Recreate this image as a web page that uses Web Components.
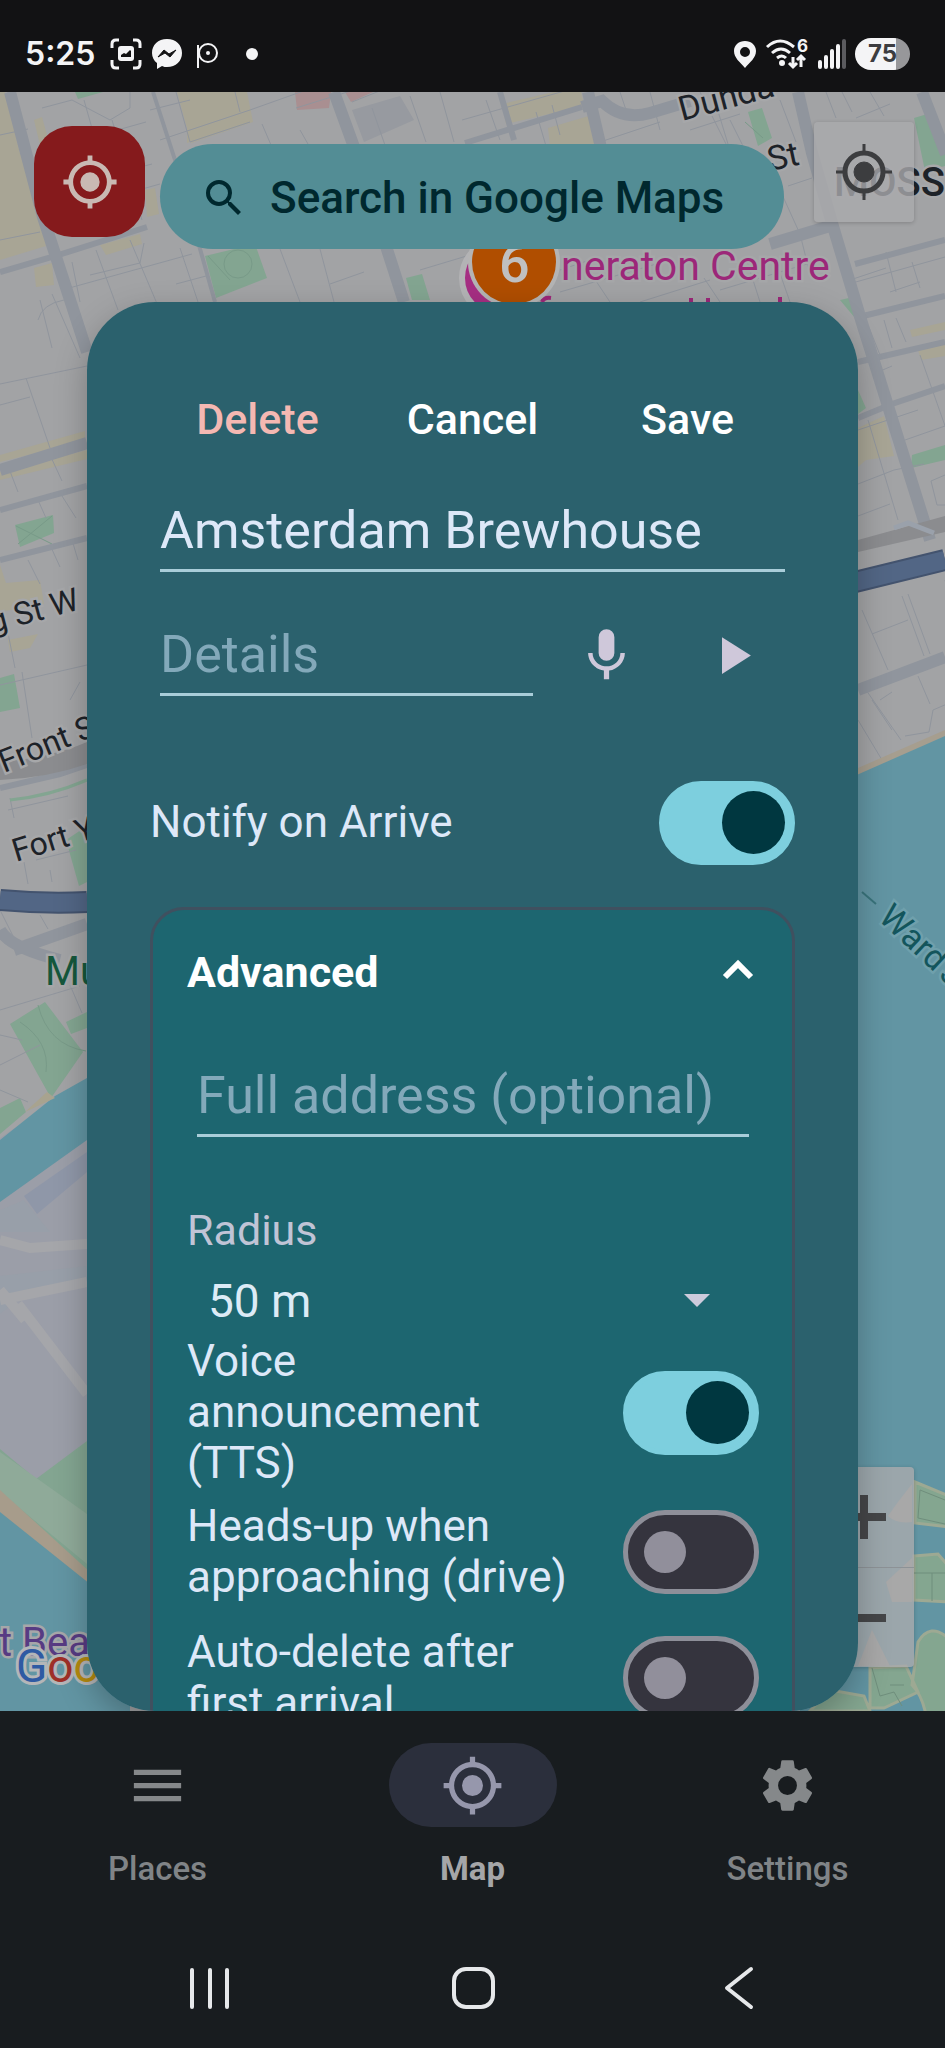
<!DOCTYPE html>
<html lang="en">
<head>
<meta charset="utf-8">
<meta name="viewport" content="width=device-width, initial-scale=1">
<title>Map</title>
<style>
    body {
        margin: 0;
        height: 100vh;
        display: flex;
        flex-direction: column;
        background: #181c1f;
        font-family: Roboto, "Liberation Sans", sans-serif;
        color: #dde8f8;
    }
</style>
</head>
<body>
    <status-bar time="5:25" battery="75"></status-bar>
    <map-stage>
        <city-map slot="map"></city-map>
        <locate-button slot="top"></locate-button>
        <search-pill slot="top">Search in Google Maps</search-pill>
        <map-controls slot="controls"></map-controls>
        <place-sheet>
            <sheet-action tone="danger" slot="actions">Delete</sheet-action>
            <sheet-action slot="actions">Cancel</sheet-action>
            <sheet-action slot="actions">Save</sheet-action>
            <line-field label="Name" value="Amsterdam Brewhouse"></line-field>
            <details-row></details-row>
            <toggle-row class="notify" checked>Notify on Arrive</toggle-row>
            <advanced-card heading="Advanced">
                <line-field label="Full address (optional)"></line-field>
                <radius-select label="Radius"></radius-select>
                <toggle-row checked>Voice<br>announcement<br>(TTS)</toggle-row>
                <toggle-row>Heads-up when<br>approaching (drive)</toggle-row>
                <toggle-row>Auto-delete after<br>first arrival</toggle-row>
            </advanced-card>
        </place-sheet>
    </map-stage>
    <nav-bar>
        <nav-tab icon="menu">Places</nav-tab>
        <nav-tab icon="locate" active>Map</nav-tab>
        <nav-tab icon="gear">Settings</nav-tab>
    </nav-bar>
    <system-bar></system-bar>

<script>
const locateIcon = `<path fill-rule="evenodd" d="M12 8a4 4 0 1 0 0 8 4 4 0 0 0 0-8zm8.94 3A8.99 8.99 0 0 0 13 3.06V1h-2v2.06A8.99 8.99 0 0 0 3.06 11H1v2h2.06A8.99 8.99 0 0 0 11 20.94V23h2v-2.06A8.99 8.99 0 0 0 20.94 13H23v-2h-2.06zM12 19a7 7 0 1 1 0-14 7 7 0 0 1 0 14z"/>`

const icons = {
    menu: `<path d="M3 18h18v-2H3v2zm0-5h18v-2H3v2zm0-7v2h18V6H3z"/>`,
    locate: locateIcon,
    gear: `<path d="M19.14 12.94c.04-.3.06-.61.06-.94 0-.32-.02-.64-.07-.94l2.03-1.58a.49.49 0 0 0 .12-.61l-1.92-3.32a.49.49 0 0 0-.59-.22l-2.39.96a7.03 7.03 0 0 0-1.62-.94l-.36-2.54a.48.48 0 0 0-.48-.41h-3.84a.47.47 0 0 0-.47.41l-.36 2.54c-.59.24-1.13.57-1.62.94l-2.39-.96a.47.47 0 0 0-.59.22L2.74 8.87a.47.47 0 0 0 .12.61l2.03 1.58c-.05.3-.09.63-.09.94s.02.64.07.94l-2.03 1.58a.49.49 0 0 0-.12.61l1.92 3.32c.12.22.37.29.59.22l2.39-.96c.5.38 1.03.7 1.62.94l.36 2.54c.05.24.24.41.48.41h3.84c.24 0 .44-.17.47-.41l.36-2.54c.59-.24 1.13-.56 1.62-.94l2.39.96c.22.08.47 0 .59-.22l1.92-3.32a.47.47 0 0 0-.12-.61l-2.01-1.58zM12 15.6a3.6 3.6 0 1 1 0-7.2 3.6 3.6 0 0 1 0 7.2z"/>`
}

class StatusBar extends HTMLElement {
    constructor() {
        super()
        this.attachShadow({mode: "open"})
        this.shadowRoot.innerHTML = `
            <style>
                :host {
                    display: flex;
                    flex: none;
                    align-items: center;
                    justify-content: space-between;
                    height: 92px;
                    padding: 16px 35px 0 25px;
                    box-sizing: border-box;
                    background: #121214;
                    color: #f4f4f6;
                    font-family: Inter, Roboto, sans-serif;
                }
                div {
                    display: flex;
                    align-items: center;
                    gap: 9px;
                }
                #time {
                    font-size: 32px;
                    line-height: 36px;
                    font-weight: 600;
                    margin-right: 6px;
                }
                #battery {
                    width: 55px;
                    border-radius: 16px;
                    background: linear-gradient(90deg, #f4f4f6 75%, #97979a 75%);
                    color: #3c3c40;
                    font-size: 24px;
                    line-height: 32px;
                    font-weight: 700;
                    text-align: center;
                }
                svg {
                    display: block;
                }
            </style>
            <div>
                <span id="time"></span>
                <svg width="32" height="32" viewBox="0 0 32 32" fill="none" stroke="#f4f4f6" stroke-width="3">
                    <path d="M2 10V6q0-4 4-4h3M23 2h3q4 0 4 4v4M30 22v4q0 4-4 4h-3M9 30H6q-4 0-4-4v-4"/>
                    <rect x="8" y="8" width="16" height="15" rx="3" fill="#f4f4f6" stroke="none"/>
                    <path d="M11 19v-2l3-2 2 1 4-4 1 1v6z" fill="#121214" stroke="none"/>
                </svg>
                <svg width="32" height="32" viewBox="0 0 32 32">
                    <path fill="#f4f4f6" d="M16 1C7 1 1 7 1 15c0 4 2 8 5 10v6l5-3c2 1 3 1 5 1 9 0 15-6 15-14S25 1 16 1z"/>
                    <path d="M7 19l6-7 5 4 7-4-6 7-5-4z" fill="#121214" stroke="#121214"/>
                </svg>
                <svg width="32" height="32" viewBox="0 0 32 32" fill="none" stroke="#f4f4f6" stroke-width="2">
                    <path d="M6 7v23"/>
                    <circle cx="16" cy="15" r="9"/>
                    <circle cx="16" cy="15" r="2" fill="#f4f4f6" stroke="none"/>
                </svg>
                <svg width="32" height="32" viewBox="0 0 32 32"><circle cx="19" cy="16" r="6" fill="#f4f4f6"/></svg>
            </div>
            <div>
                <svg width="22" height="28" viewBox="0 0 22 28">
                    <path fill="#f4f4f6" fill-rule="evenodd" d="M11 1C5 1 0 5 0 11c0 7 6 11 11 17 5-6 11-10 11-17C22 5 17 1 11 1zm0 6a5 5 0 1 1 0 10 5 5 0 0 1 0-10z"/>
                </svg>
                <svg width="44" height="32" viewBox="0 0 44 32" fill="none" stroke="#f4f4f6" stroke-width="3">
                    <path d="M2 9q13-12 27 0M7 15q9-8 18 0M12 20q5-4 9 0"/>
                    <circle cx="17" cy="25" r="3" fill="#f4f4f6" stroke="none"/>
                    <path d="M28 19v10M24 25l4 4 4-4M36 29V18M32 22l4-4 4 4"/>
                    <text x="32" y="14" font-size="17" font-weight="700" fill="#f4f4f6" stroke="none">6</text>
                </svg>
                <svg width="28" height="30" viewBox="0 0 28 30" stroke="#f4f4f6" stroke-width="4" stroke-linecap="round">
                    <path d="M2 28v-5M8 28V18M14 28V12M20 28V7"/>
                    <path stroke="#5b5b5f" d="M26 28V2"/>
                </svg>
                <span id="battery"></span>
            </div>
        `
        this.shadowRoot.querySelector("#time").textContent = this.getAttribute("time")
        this.shadowRoot.querySelector("#battery").textContent = this.getAttribute("battery")
    }
}

// Map area with the floating search row and the place sheet on top of it
class MapStage extends HTMLElement {
    constructor() {
        super()
        this.attachShadow({mode: "open"})
        this.shadowRoot.innerHTML = `
            <style>
                :host {
                    display: flex;
                    flex: 1;
                    flex-direction: column;
                    min-height: 0;
                    position: relative;
                    overflow: hidden;
                    background: #a2a3a5;
                }
                #top {
                    display: flex;
                    align-items: flex-start;
                    gap: 15px;
                    height: 210px;
                    flex: none;
                    padding: 34px 161px 0 34px;
                    box-sizing: border-box;
                    position: relative;
                }
            </style>
            <slot name="map"></slot>
            <slot name="controls"></slot>
            <div id="top"><slot name="top"></slot></div>
            <slot></slot>
        `
    }
}

class CityMap extends HTMLElement {
    constructor() {
        super()
        this.attachShadow({mode: "open"})
        this.shadowRoot.innerHTML = `
            <style>
                :host {
                    position: absolute;
                    inset: 0;
                }
                svg {
                    display: block;
                    width: 100%;
                    height: 100%;
                }
                .road {
                    fill: none;
                    stroke: #90959d;
                }
                .label {
                    fill: #1d2228;
                    stroke: #a6a7a9;
                    stroke-width: 5px;
                    paint-order: stroke;
                    font-size: 34px;
                }
                .street {
                    font-size: 32px;
                }
            </style>
            <svg viewBox="0 92 945 1619" preserveAspectRatio="xMidYMid slice" aria-hidden="true">
                <rect y="92" width="945" height="1619" fill="#a2a3a5"/>

                <!-- built-up blocks -->
                <g fill="#a8a595">
                    <path d="M0 92h5l22 90-4 12-23 4zM34 120l8-3 14 50-10 3zM0 160l26-6 20 92-46 14zM177 92h70l6 30-62 21zM187 121l52-16 8 18-60 20zM502 104l78-18 4 20-78 18zM548 128l44-13 9 27-50 13zM34 268l18-5 2 22-18 2zM145 190l10-2 4 26-12 3zM100 245l40-11 2 10-36 11z"/>
                    <path d="M0 455l85-24v10L0 462zM0 472l87-22v9L0 480zM0 565l6 18 34-3 4 24-44 8zM8 640l30-6-8 14-20 4zM858 428l26-12 10 40-28 4-8 7zM910 330l35-8v8l-33 7zM918 350l27-6v12l-24 4z"/>
                </g>
                <path d="M295 92h36l-2 16-32 2zM345 92h28l-22 10z" fill="#a98f91"/>
                <path d="M352 110l48-14 14 24-50 22z" fill="#979aa0"/>

                <!-- parks -->
                <g fill="#83a591">
                    <path d="M205 256l50-12 12 34-51 20zM406 278l16-4 8 26h-18zM75 92h28l-25 7zM748 112l14-4 10 30-14 8zM914 118l20-6 11 40v14l-20 5zM840 300l18-4 2 28zM15 525l38-10 1 18-34 14zM0 678l14-4 6 34-20 4zM66 840l21-14v56l-8 4zM912 455l33-10v15l-34 8zM858 390l8 18-8 6z"/>
                    <path d="M10 1024l35-22 38 50-32 46-14-25zM66 1022l21-10v16l-16 6zM0 1108l20-10 6 14-26 22z"/>
                </g>
                <g fill="none" stroke="#789a88" stroke-width="1">
                    <circle cx="238" cy="264" r="14"/><path d="M208 256l22 24M16 526l36 18M52 516l-34 28M745 122l18 16M38 1005q10 40 48 46M20 1022q30 20 26 50"/>
                </g>

                <!-- small streets -->
                <g class="road" stroke-width="1">
                    <path d="M0 135l28-6M0 240l40-8M8 92l20 80M42 108l30-8 38 20 20-12V92M46 150l100-28M52 190l100-26M62 146l22 72M84 100l26 92M112 120l30 100M60 212l100-28M150 110l40-10M176 92l14 50 60-20M160 140l90-30 90-32M240 112l-5-20M262 124l12 28M296 108l90-28M300 130l8 14M372 108l14 40M352 102l60-24M440 92l14 50M410 96l16 46M462 120l120-34"/>
                    <path d="M62 290l130-36M72 262l8 40M96 250l22 60M130 240l28 66M90 275l50-12 4-20M180 248l18 54M176 284l30-8M280 249l20 53M320 249l14 53M330 284l34-12M420 270l60-18M500 140l-14-40M536 112l10 34M552 105l8 30M620 92l8 24M660 130l-10-38M600 142l60-20M700 92l26 52M730 120l14 28M690 130l50-16M714 98l14 46M780 100l16 42M826 92l10 26M842 92l10 20M870 92l14 24M856 118l34-14M780 190l20 44M788 186l24-8M800 234l10 40M560 292l110-32M610 302l-20-30M640 302l70-22M720 302l-16-24M560 270l30-10M760 302l-14-44M720 290l100-30M790 302l-14-40"/>
                    <path d="M0 384l87-18M26 378l24 70M40 300l12 48M38 320q4-16 26-20M52 294l28 64M0 405l30-8M8 466l10 26M50 455l12 26M38 500l8 18M62 496l14 22M28 560l12 24M50 545l10 22M72 540l6 20M5 618l10 50M0 685l87-20M22 672l10 66M70 700l10-18M8 810l60-14M10 798l4 20M24 862l4 22M36 860l40-10M50 870l2 12M0 910l20 40M40 915l8 14M0 1010l80-24M22 1040l-22-5M70 985l12 28M0 1065l40-20M0 1090l28 12"/>
                    <path d="M845 285l100-28M886 252l10 40M890 292l30-10M850 280l36-12M912 262l8 26M868 325l12 30M884 320l8 28M896 318l10 24M878 372l14-6M920 355l30 85M858 430l60-20M868 420l30 100M858 484l36-14 30-6M858 516l32-12M945 475l-14 6 6 24h8M905 440l40-14M862 610l26 60M872 634l36-14M902 596l22 60M908 594l22 60M945 580l6 24M866 690l35 50M872 700l20 30M880 700l12-8M905 736l24-4 4-22 14-6M918 676l12 28M858 720l24 40"/>
                </g>

                <!-- main streets -->
                <g class="road" stroke-width="6">
                    <path d="M0 272l52-15 95-30M0 510l87-24M0 560l87-22M465 143l117-36M0 788l60-14 27-9M500 92l14 48M855 264l90-24M858 418l34-14 53-18M858 362l87-20M855 318l90-22"/>
                    <path stroke-width="4" d="M153 92l22 68 40 142"/>
                </g>
                <g class="road" stroke-width="12">
                    <path d="M10 92l33 125 44 135M334 92l20 55 50 155M588 92l14 60M582 107l20-6q20 20 48 12l40-12M770 244l60-18M798 92l14 61 20 70 30 100 68 217M922 92l24 62M0 470l87-27M858 690l87-33M14 950l73-26M0 930q10 18 60 30"/>
                </g>
                <path d="M0 762q50-4 87-20v22q-40 14-87 16zM858 540l87-24v16l-87 20z" fill="#8b8c8f"/>
                <path d="M10 800q40-4 77-20" fill="none" stroke="#83a591" stroke-width="3"/>

                <!-- expressway -->
                <g fill="none" stroke="#43536e" stroke-width="22">
                    <path d="M0 900q45 4 87 2M855 582l90-22"/>
                </g>
                <g fill="none" stroke="#526685" stroke-width="18">
                    <path d="M0 900q45 4 87 2M855 582l90-22"/>
                </g>
                <path d="M894 528l14-5 26 10" stroke="#9aa1ab" stroke-width="5" fill="none"/>

                <!-- harbour and island airport -->
                <path d="M0 1138l87-58v960H0z" fill="#9b9ea8"/>
                <path d="M0 1140l55-44 32-18v62l-87 62z" fill="#6295a3"/>
                <path d="M25 1112l30-14-8-6z" fill="#a8a38f"/>
                <path d="M24 1196l63-44v20l-50 42z" fill="#8f97a8"/>
                <path d="M0 1232h50l-26-32-24 10zM0 1314l25-20 62-12v-16L0 1276z" fill="#989fa9"/>
                <path d="M0 1240l30 8 57-4M0 1300l87-18M18 1304l69 90M0 1290l25 30" stroke="#a5a6aa" stroke-width="10" fill="none"/>
                <path d="M0 1449l36 30 51-38v145L0 1505z" fill="#83a591"/>
                <path d="M0 1452l87 62v50L0 1492z" fill="#8faa99"/>
                <path d="M0 1490l90 82v24l-90-84z" fill="#a79c8b"/>
                <path d="M0 1512l130 104v100H0z" fill="#6295a3"/>
                <path d="M858 768l87-38v12l-87 38z" fill="#a69e8f"/>
                <path d="M800 800l145-64v975H800z" fill="#6295a3"/>
                <path d="M862 892l14 12" stroke="#39737b" stroke-width="2"/>

                <!-- islands -->
                <g fill="#84a690" stroke="#9da993" stroke-width="3">
                    <path d="M915 1482l34 14v31l-34-4zM914 1556l24-2 12 14v34l-36-2zM918 1642q12-20 30-4v77h-22q-4-20-14-30zM870 1668l36-2 12 26-34 16h-14zM830 1690l34 6 6 15h-60z"/>
                </g>
                <path d="M912 1484v38q-16 2-24-6l10-14zM912 1558v44h-20l-6-20zM858 1666l14-36 18 36z" fill="#a19e94"/>
                <path d="M920 1490l25 10M920 1490l-2 28 27 6M914 1573h31M932 1573v28M872 1668l8 28 14-4 8 14M890 1685h14" fill="none" stroke="#6f8e7c" stroke-width="1"/>

                <text class="label" transform="translate(682 121) rotate(-15)">Dunda</text>
                <text class="label" transform="translate(770 171) rotate(-12)">St</text>
                <text class="label" x="834" y="196" font-weight="500" style="font-size: 40px">MOSS</text>
                <text class="label street" transform="translate(-8 633) rotate(-15)">g St W</text>
                <text class="label street" transform="translate(4 773) rotate(-22)">Front S</text>
                <text class="label street" transform="translate(16 862) rotate(-17)">Fort Y</text>
                <text class="label" x="45" y="985" style="font-size: 40px; fill: #15573c">Mu</text>
                <text class="label" transform="translate(877 919) rotate(43)" style="fill: #13555c; stroke: #6fa0ac">Ward's</text>
                <text class="label" x="-1" y="1656" style="font-size: 40px; fill: #573b83">t Bea</text>
                <text x="16" y="1682" font-size="46" stroke="#b4b6b8" stroke-width="6" paint-order="stroke"><tspan fill="#2f5aa3">G</tspan><tspan fill="#9e2f28">o</tspan><tspan fill="#b58a0e">o</tspan></text>

                <!-- hotel pin and its cluster badge -->
                <circle cx="500" cy="278" r="38" fill="#a62e83" stroke="#b3b3b5" stroke-width="6"/>
                <text class="label" x="561" y="280" style="font-size: 41px; fill: #9c2779">neraton Centre</text>
                <path d="M542 302q2-5 9-4M691 298v4M708 298v4M780 297v5" stroke="#9c2779" stroke-width="4" fill="none"/>
                <circle cx="514" cy="262" r="46" fill="#b4b4b4"/>
                <circle cx="514" cy="262" r="42" fill="#b04e00"/>
                <text x="499" y="282" font-size="54" font-weight="500" fill="#c0c0c0">6</text>
            </svg>
        `
    }
}

class LocateButton extends HTMLElement {
    constructor() {
        super()
        this.attachShadow({mode: "open"})
        this.shadowRoot.innerHTML = `
            <style>
                :host {
                    display: block;
                    flex: none;
                }
                button {
                    display: grid;
                    place-items: center;
                    width: 111px;
                    height: 111px;
                    padding: 0;
                    border: 0;
                    border-radius: 38px;
                    background: #851a1c;
                    fill: #c9b9b3;
                }
            </style>
            <button aria-label="My location"><svg width="58" height="58" viewBox="0 0 24 24">${locateIcon}</svg></button>
        `
    }
}

class SearchPill extends HTMLElement {
    constructor() {
        super()
        this.attachShadow({mode: "open"})
        this.shadowRoot.innerHTML = `
            <style>
                :host {
                    display: block;
                    flex: 1;
                    margin-top: 18px;
                }
                button {
                    display: flex;
                    align-items: center;
                    gap: 22px;
                    width: 100%;
                    height: 105px;
                    padding: 2px 40px 0;
                    border: 0;
                    border-radius: 53px;
                    background: #538d95;
                    color: #00282e;
                    font: 500 44px/50px Roboto, sans-serif;
                    white-space: nowrap;
                }
                svg {
                    flex: none;
                    fill: #00282e;
                }
            </style>
            <button>
                <svg width="48" height="48" viewBox="0 0 24 24"><path d="M15.5 14h-.79l-.28-.27A6.47 6.47 0 0 0 16 9.5 6.5 6.5 0 1 0 9.5 16c1.61 0 3.09-.59 4.23-1.57l.27.28v.79l5 4.99L20.49 19l-4.99-5zm-6 0a4.5 4.5 0 1 1 0-9 4.5 4.5 0 0 1 0 9z"/></svg>
                <slot></slot>
            </button>
        `
    }
}

class MapControls extends HTMLElement {
    constructor() {
        super()
        this.attachShadow({mode: "open"})
        this.shadowRoot.innerHTML = `
            <style>
                :host {
                    position: absolute;
                    inset: 30px 31px 44px auto;
                    display: flex;
                    flex-direction: column;
                    justify-content: space-between;
                }
                div {
                    border-radius: 4px;
                    background: rgba(170, 170, 172, .8);
                    box-shadow: 0 1px 4px rgba(0, 0, 0, .2);
                }
                button {
                    display: grid;
                    place-items: center;
                    width: 100px;
                    height: 100px;
                    padding: 0;
                    border: 0;
                    background: none;
                }
                button + button {
                    border-top: 1px solid #8d9296;
                }
            </style>
            <div>
                <button aria-label="Centre map"><svg width="56" height="56" viewBox="0 0 56 56" fill="none" stroke="#3c3d3f">
                    <circle cx="28" cy="28" r="19" stroke-width="5"/>
                    <circle cx="28" cy="28" r="10" fill="#3c3d3f"/>
                    <path stroke-width="3" d="M28 0v9M28 47v9M0 28h9M47 28h9"/>
                </svg></button>
            </div>
            <div>
                <button aria-label="Zoom in"><svg width="44" height="44"><path d="M22 0v44M0 22h44" stroke="#454648" stroke-width="8"/></svg></button>
                <button aria-label="Zoom out"><svg width="44" height="44"><path d="M0 22h44" stroke="#454648" stroke-width="8"/></svg></button>
            </div>
        `
    }
}

class PlaceSheet extends HTMLElement {
    constructor() {
        super()
        this.attachShadow({mode: "open"})
        this.shadowRoot.innerHTML = `
            <style>
                :host {
                    display: flex;
                    flex: 1;
                    flex-direction: column;
                    gap: 42px;
                    min-height: 0;
                    margin: 0 87px;
                    padding: 86px 63px 0;
                    position: relative;
                    overflow-y: auto;
                    scrollbar-width: none;
                    border-radius: 68px;
                    background: #2b616d;
                    box-shadow: 0 12px 32px rgba(0, 0, 0, .25);
                }
                header {
                    display: flex;
                    flex: none;
                }
                ::slotted(.notify) {
                    margin-top: 42px;
                    height: 85px;
                    min-height: 85px;
                }
            </style>
            <header><slot name="actions"></slot></header>
            <slot></slot>
        `
    }
}

class SheetAction extends HTMLElement {
    constructor() {
        super()
        this.attachShadow({mode: "open"})
        this.shadowRoot.innerHTML = `
            <style>
                :host {
                    display: block;
                    flex: 1;
                    color: #ffffff;
                }
                :host([tone="danger"]) {
                    color: #f4b8b2;
                }
                button {
                    width: 100%;
                    height: 60px;
                    padding: 2px 0 0;
                    border: 0;
                    background: none;
                    color: inherit;
                    font: 500 43px/50px Roboto, sans-serif;
                }
            </style>
            <button><slot></slot></button>
        `
    }
}

class LineField extends HTMLElement {
    constructor() {
        super()
        this.attachShadow({mode: "open"})
        this.shadowRoot.innerHTML = `
            <style>
                :host {
                    display: block;
                    flex: none;
                    margin: 0 10px;
                }
                input {
                    display: block;
                    width: 100%;
                    height: 82px;
                    padding: 2px 0 0;
                    box-sizing: border-box;
                    border: 0;
                    border-bottom: 3px solid #a9cdd9;
                    border-radius: 0;
                    outline: 0;
                    background: none;
                    color: #dde8f8;
                    font: 400 52px/62px Roboto, sans-serif;
                }
                input::placeholder {
                    color: #83a9ba;
                    opacity: 1;
                }
            </style>
            <input type="text">
        `
        const input = this.shadowRoot.querySelector("input")
        input.setAttribute("aria-label", this.getAttribute("label"))
        input.placeholder = this.getAttribute("label")
        input.value = this.getAttribute("value") || ""
    }
}

class DetailsRow extends HTMLElement {
    constructor() {
        super()
        this.attachShadow({mode: "open"})
        this.shadowRoot.innerHTML = `
            <style>
                :host {
                    display: flex;
                    flex: none;
                }
                line-field {
                    flex: 1;
                }
                button {
                    display: grid;
                    place-items: center;
                    width: 126px;
                    padding: 0;
                    border: 0;
                    background: none;
                    fill: #cfc8da;
                }
            </style>
            <line-field label="Details"></line-field>
            <button aria-label="Dictate details"><svg width="63" height="63" viewBox="0 0 24 24"><path d="M12 14a3 3 0 0 0 3-3V5a3 3 0 0 0-6 0v6a3 3 0 0 0 3 3zm5.3-3c0 3-2.54 5.1-5.3 5.1S6.7 14 6.7 11H5c0 3.41 2.72 6.23 6 6.72V21h2v-3.28c3.28-.48 6-3.3 6-6.72h-1.7z"/></svg></button>
            <button aria-label="Play details"><svg width="63" height="63" viewBox="0 0 24 24"><path d="M8 5v14l11-7z"/></svg></button>
        `
    }
}

class ToggleRow extends HTMLElement {
    constructor() {
        super()
        this.attachShadow({mode: "open"})
        this.shadowRoot.innerHTML = `
            <style>
                :host {
                    display: flex;
                    flex: none;
                    min-height: 126px;
                }
                label {
                    display: flex;
                    flex: 1;
                    align-items: center;
                    justify-content: space-between;
                    font-size: 44px;
                    line-height: 51px;
                }
                input {
                    appearance: none;
                    display: flex;
                    flex: none;
                    align-items: center;
                    width: 136px;
                    height: 84px;
                    margin: 0;
                    padding: 0 16px;
                    box-sizing: border-box;
                    border: 5px solid #8e8f99;
                    border-radius: 42px;
                    background: #35343e;
                }
                input::before {
                    content: "";
                    width: 42px;
                    height: 42px;
                    border-radius: 50%;
                    background: #918f9b;
                }
                input:checked {
                    justify-content: flex-end;
                    padding: 0 5px;
                    border-color: #7dcfde;
                    background: #7dcfde;
                }
                input:checked::before {
                    width: 63px;
                    height: 63px;
                    background: #003740;
                }
            </style>
            <label><span><slot></slot></span><input type="checkbox" role="switch"></label>
        `
        this.shadowRoot.querySelector("input").checked = this.hasAttribute("checked")
    }
}

class AdvancedCard extends HTMLElement {
    constructor() {
        super()
        this.attachShadow({mode: "open"})
        this.shadowRoot.innerHTML = `
            <style>
                :host {
                    display: flex;
                    flex: none;
                    flex-direction: column;
                    padding: 34px 33px 34px 34px;
                    border: 3px solid #40505f;
                    border-radius: 34px;
                    background: #1d6670;
                }
                button {
                    display: flex;
                    align-items: center;
                    justify-content: space-between;
                    height: 56px;
                    margin-bottom: 55px;
                    padding: 0;
                    border: 0;
                    background: none;
                    color: #ffffff;
                    font: 700 43px/50px Roboto, sans-serif;
                }
            </style>
            <button aria-expanded="true">
                <span></span>
                <svg width="42" height="32" viewBox="0 0 42 32" fill="none" stroke="#ffffff" stroke-width="6"><path d="M8 21l13-13 13 13"/></svg>
            </button>
            <slot></slot>
        `
        this.shadowRoot.querySelector("span").textContent = this.getAttribute("heading")
    }
}

class RadiusSelect extends HTMLElement {
    constructor() {
        super()
        this.attachShadow({mode: "open"})
        this.shadowRoot.innerHTML = `
            <style>
                :host {
                    display: block;
                    padding-top: 68px;
                }
                label {
                    display: block;
                    color: #c0c4d6;
                    font-size: 43px;
                    line-height: 50px;
                }
                div {
                    display: flex;
                    align-items: center;
                    padding-right: 49px;
                    margin-top: 9px;
                }
                select {
                    appearance: none;
                    flex: 1;
                    height: 72px;
                    padding: 2px 0 0 21px;
                    border: 0;
                    background: none;
                    color: #dcebf6;
                    font: 400 46px/54px Roboto, sans-serif;
                }
                svg {
                    flex: none;
                    fill: #cdcbdc;
                    pointer-events: none;
                }
            </style>
            <label for="radius"></label>
            <div>
                <select id="radius">
                    <option>50 m</option>
                    <option>100 m</option>
                    <option>200 m</option>
                </select>
                <svg width="26" height="13"><path d="M0 0h26L13 13z"/></svg>
            </div>
        `
        this.shadowRoot.querySelector("label").textContent = this.getAttribute("label")
    }
}

class NavBar extends HTMLElement {
    constructor() {
        super()
        this.attachShadow({mode: "open"})
        this.shadowRoot.innerHTML = `
            <style>
                :host {
                    display: block;
                    flex: none;
                    background: #181c1f;
                }
                nav {
                    display: flex;
                    padding: 32px 0 38px;
                }
            </style>
            <nav><slot></slot></nav>
        `
    }
}

class NavTab extends HTMLElement {
    constructor() {
        super()
        this.attachShadow({mode: "open"})
        this.shadowRoot.innerHTML = `
            <style>
                :host {
                    display: block;
                    flex: 1;
                }
                a {
                    display: flex;
                    flex-direction: column;
                    align-items: center;
                    gap: 21px;
                    color: #808487;
                    font-size: 33px;
                    line-height: 42px;
                    font-weight: 500;
                    text-decoration: none;
                }
                span {
                    display: grid;
                    place-items: center;
                    width: 168px;
                    height: 84px;
                    border-radius: 42px;
                    fill: #85888a;
                }
                :host([active]) a {
                    color: #a5a6a8;
                    font-weight: 700;
                }
                :host([active]) span {
                    background: #2b2f3c;
                    fill: #9697ac;
                }
            </style>
            <a href="#">
                <span><svg width="63" height="63" viewBox="0 0 24 24">${icons[this.getAttribute("icon")]}</svg></span>
                <slot></slot>
            </a>
        `
    }
}

class SystemBar extends HTMLElement {
    constructor() {
        super()
        this.attachShadow({mode: "open"})
        this.shadowRoot.innerHTML = `
            <style>
                :host {
                    display: flex;
                    flex: none;
                    justify-content: center;
                    height: 120px;
                    background: #181c1f;
                }
                button {
                    display: grid;
                    place-items: center;
                    flex: 0 1 264px;
                    padding: 0;
                    border: 0;
                    background: none;
                }
                svg {
                    fill: none;
                    stroke: #e6e8ea;
                    stroke-width: 4px;
                    stroke-linecap: round;
                    stroke-linejoin: round;
                }
            </style>
            <button aria-label="Recent apps"><svg width="44" height="44"><path d="M5 4v37M23 4v37M40 4v37"/></svg></button>
            <button aria-label="Home"><svg width="44" height="44"><rect x="3" y="3" width="39" height="38" rx="12"/></svg></button>
            <button aria-label="Back"><svg width="44" height="44"><path d="M36 3L12 22l24 19"/></svg></button>
        `
    }
}

window.customElements.define("status-bar", StatusBar)
window.customElements.define("map-stage", MapStage)
window.customElements.define("city-map", CityMap)
window.customElements.define("locate-button", LocateButton)
window.customElements.define("search-pill", SearchPill)
window.customElements.define("map-controls", MapControls)
window.customElements.define("place-sheet", PlaceSheet)
window.customElements.define("sheet-action", SheetAction)
window.customElements.define("line-field", LineField)
window.customElements.define("details-row", DetailsRow)
window.customElements.define("toggle-row", ToggleRow)
window.customElements.define("advanced-card", AdvancedCard)
window.customElements.define("radius-select", RadiusSelect)
window.customElements.define("nav-bar", NavBar)
window.customElements.define("nav-tab", NavTab)
window.customElements.define("system-bar", SystemBar)
</script>
</body>
</html>
